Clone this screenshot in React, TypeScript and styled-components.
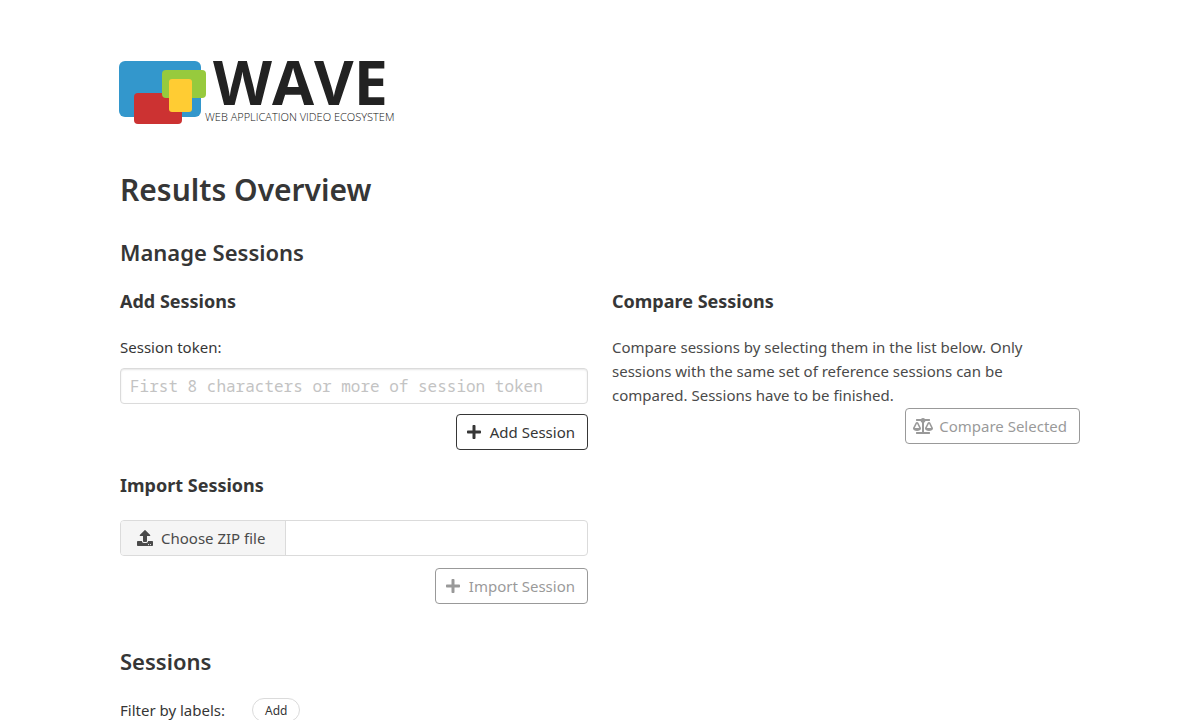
import React from "react";
import styled, { createGlobalStyle } from "styled-components";
import { FaBalanceScale, FaPlus, FaUpload } from "react-icons/fa";

const GlobalStyle = createGlobalStyle`
  *, *::before, *::after { box-sizing: border-box; }
  body {
    margin: 0;
    background: #fff;
    color: #4a4a4a;
    font-family: "Noto Sans", "Open Sans", sans-serif;
    font-size: 15px;
    line-height: 24px;
  }
  h1, h2, h3, p { margin: 0; }
`;

const Page = styled.main`
  max-width: 960px;
  margin: 0 auto;
  padding: 56px 0 24px;
`;

const Logo = styled.svg`
  display: block;
  width: 280px;
  height: 72px;
  margin: 0 0 44px -4px;
  overflow: visible;
`;

const Title = styled.h1`
  color: #363636;
  font-size: 30px;
  font-weight: 600;
  line-height: 36px;
`;

const Subtitle = styled.h2`
  margin-top: 30px;
  color: #363636;
  font-size: 22px;
  font-weight: 600;
  line-height: 28px;
`;

const Columns = styled.div`
  display: grid;
  grid-template-columns: 1fr 1fr;
  gap: 24px;
  margin: 23px 0 43px;
`;

const Heading = styled.h3`
  margin-bottom: 22px;
  color: #363636;
  font-size: 18px;
  font-weight: 700;
  line-height: 24px;
`;

const Label = styled.label`
  display: block;
  margin-bottom: 9px;
  color: #363636;
`;

const TokenInput = styled.input`
  display: block;
  width: 100%;
  height: 36px;
  padding: 0 9px;
  border: 1px solid #dbdbdb;
  border-radius: 4px;
  box-shadow: inset 0 1px 2px rgba(10, 10, 10, 0.1);
  color: #363636;
  font-family: "Noto Sans Mono", "DejaVu Sans Mono", monospace;
  font-size: 16px;
  &::placeholder { color: #c3c3c3; opacity: 1; }
`;

const Actions = styled.div<{ $gap: number }>`
  display: flex;
  justify-content: flex-end;
  margin-top: ${(p) => p.$gap}px;
`;

const Button = styled.button`
  display: flex;
  align-items: center;
  gap: 8px;
  height: 36px;
  padding: 0 12px 0 9px;
  border: 1px solid #363636;
  border-radius: 4px;
  background: #fff;
  color: #363636;
  font: inherit;
  cursor: pointer;
  &:disabled { opacity: 0.5; cursor: not-allowed; }
`;

const CompareButton = styled(Button)`
  gap: 6px;
  padding-left: 7px;
`;

const ImportSection = styled.section`
  margin-top: 23px;
`;

const FilePicker = styled.label`
  position: relative;
  display: flex;
  height: 36px;
  margin-top: 23px;
  border: 1px solid #dbdbdb;
  border-radius: 4px;
  overflow: hidden;
  cursor: pointer;
`;

const FileInput = styled.input`
  position: absolute;
  inset: 0;
  width: 100%;
  opacity: 0;
`;

const FileButton = styled.span`
  display: flex;
  align-items: center;
  gap: 8px;
  padding: 0 20px 0 16px;
  border-right: 1px solid #dbdbdb;
  background: #f5f5f5;
`;

const FilterRow = styled.div`
  display: flex;
  align-items: center;
  gap: 27px;
  margin-top: 23px;
  color: #363636;
`;

const TagButton = styled.button`
  height: 24px;
  padding: 0 12px;
  border: 1px solid #dbdbdb;
  border-radius: 12px;
  background: #fff;
  color: #363636;
  font: inherit;
  font-size: 12px;
`;

export default function App() {
  return (
    <>
      <GlobalStyle />
      <Page>
        <Logo viewBox="0 0 280 72" role="img" aria-label="WAVE Web Application Video Ecosystem">
          <rect x="3" y="5" width="82" height="56" rx="6" fill="#3397cc" />
          <rect x="46" y="14" width="44" height="28" rx="4" fill="#97ca3d" />
          <rect x="18" y="37" width="48" height="31" rx="4" fill="#cc3232" />
          <path d="M46 37H62Q66 37 66 41V42H50Q46 42 46 38Z" fill="#97ca3d" />
          <rect x="53" y="23" width="23" height="33" rx="3" fill="#ffcc33" />
          <text x="97" y="49" fill="#222" fontFamily="Open Sans, sans-serif" fontWeight="700" fontSize="61">WAVE</text>
          <text x="89" y="65" fill="#111" fontFamily="Open Sans, sans-serif" fontWeight="300" fontSize="11">WEB APPLICATION VIDEO ECOSYSTEM</text>
        </Logo>
        <Title>Results Overview</Title>
        <Subtitle>Manage Sessions</Subtitle>
        <Columns>
          <div>
            <section>
              <Heading>Add Sessions</Heading>
              <Label htmlFor="token">Session token:</Label>
              <TokenInput id="token" type="text" placeholder="First 8 characters or more of session token" />
              <Actions $gap={10}>
                <Button type="button"><FaPlus size={16} />Add Session</Button>
              </Actions>
            </section>
            <ImportSection>
              <Heading>Import Sessions</Heading>
              <FilePicker>
                <FileInput type="file" accept=".zip" />
                <FileButton><FaUpload size={16} />Choose ZIP file</FileButton>
              </FilePicker>
              <Actions $gap={12}>
                <Button type="button" disabled><FaPlus size={16} />Import Session</Button>
              </Actions>
            </ImportSection>
          </div>
          <section>
            <Heading>Compare Sessions</Heading>
            <p>
              Compare sessions by selecting them in the list below. Only sessions with the same set of
              reference sessions can be compared. Sessions have to be finished.
            </p>
            <Actions $gap={1}>
              <CompareButton type="button" disabled><FaBalanceScale size={20} />Compare Selected</CompareButton>
            </Actions>
          </section>
        </Columns>
        <Subtitle>Sessions</Subtitle>
        <FilterRow>
          <span>Filter by labels:</span>
          <TagButton type="button">Add</TagButton>
        </FilterRow>
      </Page>
    </>
  );
}
